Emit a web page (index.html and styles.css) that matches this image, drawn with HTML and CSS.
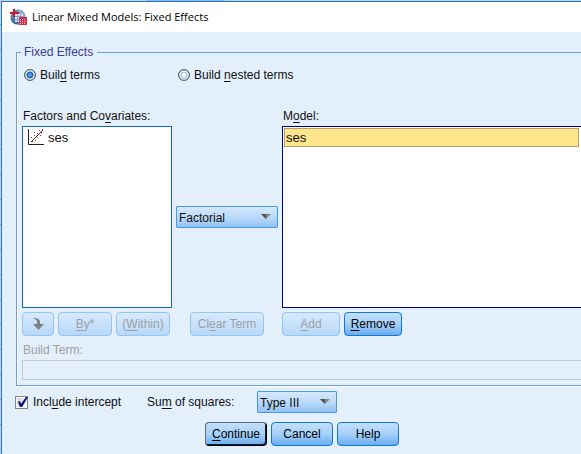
FILE: index.html
```html
<!DOCTYPE html>
<html lang="en">
<head>
<meta charset="utf-8">
<title>Linear Mixed Models: Fixed Effects</title>
<link rel="stylesheet" href="styles.css">
</head>
<body>
<main class="dialog">
  <header class="titlebar">
    <svg class="app-icon" width="17" height="17" viewBox="0 0 17 17" aria-hidden="true">
      <circle cx="8" cy="8" r="7.600" fill="#5b8bbf"/>
      <path d="M8 .4a7.600 7.600 0 0 1 7.600 7.600H8z" fill="#86add5"/>
      <path d="M.6 9.500h7.400v6.100A7.600 7.600 0 0 1 .6 9.500z" fill="#3c6ca5"/>
      <path d="M5 5h8v8H5z" fill="#dce8f4"/>
      <path d="M5 7.500h8M5 10.500h8M7.500 5v8M10.500 5v8" stroke="#7ea3cc" stroke-width="1"/>
      <path d="M3 0h2v3h4v2H5v3H3V5H0V3h3z" fill="#d0142c"/>
      <path d="M9 8h8v8H9z" fill="#cf2d4a"/>
      <path d="M10 10h1v1h-1zM12 10h1v1h-1zM14 10h1v1h-1zM10 12h1v1h-1zM12 12h1v1h-1zM14 12h1v1h-1zM10 14h1v1h-1zM12 14h1v1h-1zM14 14h1v1h-1z" fill="#f6c8d0"/>
    </svg>
    <h1 class="title">Linear Mixed Models: Fixed Effects</h1>
  </header>

  <form class="content">
    <fieldset class="group">
      <legend>Fixed Effects</legend>

      <div class="modes">
        <label class="choice"><input type="radio" name="mode" checked><span>Buil<u>d</u> terms</span></label>
        <label class="choice"><input type="radio" name="mode"><span>Build <u>n</u>ested terms</span></label>
      </div>

      <div class="columns heads">
        <span id="factors-label">Factors and Co<u>v</u>ariates:</span>
        <span></span>
        <span id="model-label">M<u>o</u>del:</span>
      </div>

      <div class="columns lists">
        <ul class="list" role="listbox" tabindex="0" aria-labelledby="factors-label">
          <li role="option">
            <svg width="16" height="17" viewBox="0 0 16 17" aria-hidden="true">
              <path d="M.5 0v15.500H16" fill="none" stroke="#222"/>
              <path d="M3 13l3-3 1-1 3-3 1-1 4-4" fill="none" stroke="#333"/>
              <path d="M3 8h1v1H3zM6 6h1v1H6zM6 3h1v1H6zM9 4h1v1H9zM11 1h1v1h-1zM13 3h1v1h-1zM14 0h1v1h-1zM12 6h1v1h-1zM9 8h1v1H9zM7 11h1v1H7zM4 12h1v1H4z" fill="#f01818"/>
            </svg>
            <span>ses</span>
          </li>
        </ul>
        <span class="combo">
          <select aria-label="Term type"><option>Factorial</option></select>
          <svg width="10" height="6" viewBox="0 0 10 6" aria-hidden="true"><path d="M0 0h10L5 5z" fill="#858585"/><path d="M0 0h5v5z" fill="#505050"/></svg>
        </span>
        <ul class="list model" role="listbox" tabindex="0" aria-labelledby="model-label">
          <li class="selected" role="option" aria-selected="true">ses</li>
        </ul>
      </div>

      <div class="columns actions">
        <div class="buttons">
          <button class="arrow" type="button" disabled aria-label="Move down">
            <svg width="12" height="12" viewBox="0 0 12 12" aria-hidden="true"><path d="M2 0c3 0 6 1 6 4v2h4l-5.500 6L1 6h4V4c0-2-1-3-3-3z" fill="#808080"/></svg>
          </button>
          <button class="short" type="button" disabled><u>B</u>y*</button>
          <button class="short" type="button" disabled>(<u>W</u>ithin)</button>
        </div>
        <button class="long" type="button" disabled>Cl<u>e</u>ar Term</button>
        <div class="buttons">
          <button class="medium" type="button" disabled><u>A</u>dd</button>
          <button class="medium" type="button"><u>R</u>emove</button>
        </div>
      </div>

      <label class="term"><span>Build Term:</span><input type="text" disabled></label>
    </fieldset>

    <div class="options">
      <label class="check">
        <span class="checkbox">
          <input type="checkbox" checked>
          <svg width="13" height="13" viewBox="0 0 13 13" aria-hidden="true"><path d="M3 6l2-1 1 3 5-7h2L7 11H5z" fill="#0a0a82"/></svg>
        </span>
        <span>Incl<u>u</u>de intercept</span>
      </label>
      <label class="squares" for="squares">Su<u>m</u> of squares:</label>
      <span class="combo">
        <select id="squares"><option>Type III</option></select>
        <svg width="10" height="6" viewBox="0 0 10 6" aria-hidden="true"><path d="M0 0h10L5 5z" fill="#858585"/><path d="M0 0h5v5z" fill="#505050"/></svg>
      </span>
    </div>

    <div class="footer">
      <button class="default" type="submit"><u>C</u>ontinue</button>
      <button type="button">Cancel</button>
      <button type="button">Help</button>
    </div>
  </form>
</main>
</body>
</html>
```
FILE: styles.css
```css
* { box-sizing: border-box; }

body {
  margin: 0;
  padding: 1px 0 0 1px;
  min-height: 100vh;
  display: flex;
  overflow: hidden;
  background:
    linear-gradient(90deg, #c9d0d8 146px, #8db9e3 146px 225px, #c9d0d8 225px),
    repeating-linear-gradient(#c9d0d8 0 24px, #7da0c4 24px 25px);
  background-size: 100% 1px, auto;
  background-repeat: no-repeat, repeat;
  font: 12px/14px "Liberation Sans", Arial, sans-serif;
  color: #111;
}

u { text-underline-offset: 2px; }

.dialog {
  flex: 1;
  min-width: 0;
  border: solid #2077c4;
  border-width: 1px 0 0 1px;
  background: #e3effb;
}

.titlebar {
  display: flex;
  align-items: center;
  gap: 5px;
  height: 30px;
  padding-left: 8px;
  background: #fff;
}

.title {
  margin: 0;
  font: 11px/16px "Open Sans", "Noto Sans", sans-serif;
  color: #000;
}

.content { padding-top: 13px; }

.group {
  margin: 0 0 0 14px;
  padding: 9px 0 5px 5px;
  min-width: 0;
  border: 1px solid #6f9fd0;
  border-right: 0;
  box-shadow: inset 1px 0 #fff, 0 1px #fff;
}

.group legend {
  margin-left: -1px;
  padding: 0 4px 0 3px;
  color: #3c3c96;
}

.modes {
  display: grid;
  grid-template-columns: 154px 1fr;
  margin-left: 2px;
}

.choice, .check {
  display: flex;
  align-items: center;
  gap: 4px;
}

input[type="radio"] {
  appearance: none;
  width: 12px;
  height: 12px;
  margin: 0;
  border: 1px solid #55606b;
  border-radius: 50%;
  background: radial-gradient(circle, #fff 0 2px, #8fb6de 3px, #fff 4px, #aab3bc 5px);
}

input[type="radio"]:checked {
  background: radial-gradient(circle, #4da3ee 0 1px, #145fb2 3px, #fff 4px, #aab3bc 5px);
}

.columns {
  display: grid;
  grid-template-columns: 150px 110px minmax(0, 1fr);
  justify-items: center;
}

.columns > :first-child, .columns > :last-child { justify-self: stretch; }

.heads { margin: 27px 0 3px; padding-left: 1px; }

.lists { align-items: center; }

.list {
  height: 182px;
  margin: 0;
  padding: 1px;
  list-style: none;
  border: 1px solid #1468b4;
  background: #fff;
  font-size: 13px;
  outline: 0;
}

.list li {
  display: flex;
  align-items: center;
  gap: 4px;
  height: 19px;
  padding-left: 4px;
}

.list.model { border-color: #0000a0; border-right: 0; padding-right: 2px; }
.list .selected { padding-left: 1px; border: 1px solid #b5a162; background: #ffe58c; }

.combo { display: grid; align-items: center; width: 102px; }
.combo > * { grid-area: 1 / 1; }
.combo svg { justify-self: end; margin-right: 7px; pointer-events: none; }

select {
  appearance: none;
  width: 100%;
  height: 22px;
  padding: 2px 2px 0;
  border: 1px solid #459ae8;
  border-radius: 1px;
  background: linear-gradient(#d6e8fc, #bbdafa 50%, #94c3f1);
  font: inherit;
  color: inherit;
}

button {
  display: inline-flex;
  align-items: center;
  justify-content: center;
  width: 62px;
  height: 24px;
  padding: 0;
  border: 1px solid #1278d2;
  border-radius: 4px;
  background: linear-gradient(#c2dffc, #a7d0fa 50%, #69adf0);
  font: inherit;
  color: #000;
  white-space: pre;
}

button:disabled {
  border-color: #96c5ef;
  background: linear-gradient(#d8eafd, #b7d8f8);
  color: #9c9fa4;
}

.default {
  border-color: #5d6b7b #000 #000 #5d6b7b;
  box-shadow: inset -1px -1px #0b2038;
}

.buttons { display: flex; gap: 4px; }
.actions { margin-top: 4px; }
.arrow { width: 32px; }
.short { width: 54px; }
.medium { width: 58px; }
.long { width: 74px; }

.term {
  display: grid;
  gap: 3px;
  margin-top: 7px;
  color: #9c9fa4;
}

.term span { padding-left: 1px; }

.term input {
  width: 100%;
  height: 20px;
  padding: 0 2px;
  border: 1px solid #c5c8cc;
  border-right: 0;
  background: transparent;
  font: inherit;
}

.options {
  display: flex;
  align-items: center;
  margin: 5px 0 9px 13px;
}

.options .check { width: 132px; gap: 5px; }
.options .squares { width: 110px; }
.options > .combo { width: 80px; }

.checkbox { display: grid; }
.checkbox > * { grid-area: 1 / 1; }
.checkbox svg { pointer-events: none; }

input[type="checkbox"] {
  appearance: none;
  width: 13px;
  height: 13px;
  margin: 0;
  border: 1px solid #82868c;
  background: linear-gradient(135deg, #c8ccd2, #fff);
  box-shadow: inset 0 0 0 1px #fff;
}

.footer {
  display: flex;
  justify-content: center;
  gap: 4px;
  padding-left: 21px;
}
```
